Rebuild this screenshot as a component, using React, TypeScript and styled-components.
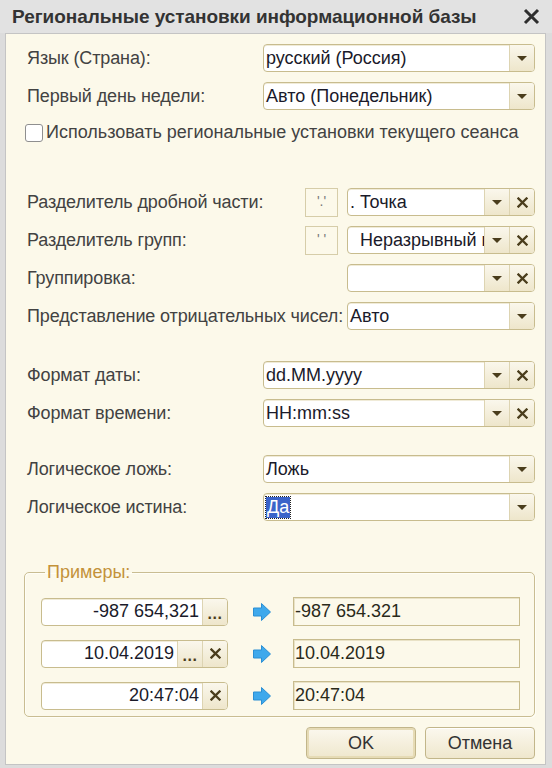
import React from 'react'
import styled, { createGlobalStyle } from 'styled-components'

const GlobalStyle = createGlobalStyle`
  html, body {
    margin: 0;
    padding: 0;
    background: #d9d9d9;
  }
  body {
    font-family: "Liberation Sans", Arial, sans-serif;
  }
`

const ArrowDown = () => <Tri />

const Cross = ({ size = 11 }: { size?: number }) => (
  <svg width={size} height={size} viewBox="0 0 11 11">
    <path d="M1.5 1.5 L9.5 9.5 M9.5 1.5 L1.5 9.5" stroke="#4a3d1c" strokeWidth="2.3" strokeLinecap="square" />
  </svg>
)

const BlueArrow = () => (
  <svg width="20" height="20" viewBox="0 0 20 20">
    <path
      d="M1.5 6 H9.5 V1.5 L18.5 10 L9.5 18.5 V14 H1.5 Z"
      fill="#3fa9ec"
      stroke="#2b8fd4"
      strokeWidth="1"
      strokeLinejoin="round"
    />
  </svg>
)

type Btn = 'drop' | 'clear' | 'dots'

const FieldButtons = ({ buttons }: { buttons: Btn[] }) => (
  <>
    {buttons.map((b, i) => (
      <SegButton key={i}>
        {b === 'drop' && <ArrowDown />}
        {b === 'clear' && <Cross />}
        {b === 'dots' && <Dots>...</Dots>}
      </SegButton>
    ))}
  </>
)

const SelectRow = ({
  label,
  value,
  buttons,
  selected,
}: {
  label: string
  value: string
  buttons: Btn[]
  selected?: boolean
}) => (
  <Row>
    <Label>{label}</Label>
    <Field $w={272}>
      <FieldText>{selected ? <Selected>{value}</Selected> : value}</FieldText>
      <FieldButtons buttons={buttons} />
    </Field>
  </Row>
)

const SeparatorRow = ({
  label,
  sample,
  value,
  buttons = ['drop', 'clear'],
}: {
  label: string
  sample?: string
  value: string
  buttons?: Btn[]
}) => (
  <Row>
    <Label>{label}</Label>
    <RightPart>
      {sample !== undefined ? <SampleBox>{sample}</SampleBox> : <SampleGap />}
      <Field $w={188}>
        <FieldText>{value}</FieldText>
        <FieldButtons buttons={buttons} />
      </Field>
    </RightPart>
  </Row>
)

const examples: { input: string; buttons: Btn[]; output: string }[] = [
  { input: '-987 654,321', buttons: ['dots'], output: '-987 654.321' },
  { input: '10.04.2019', buttons: ['dots', 'clear'], output: '10.04.2019' },
  { input: '20:47:04', buttons: ['clear'], output: '20:47:04' },
]

const App = () => {
  return (
    <>
      <GlobalStyle />
      <Window>
        <TitleBar>
          <Title>Региональные установки информационной базы</Title>
          <CloseBtn>
            <svg width="17" height="17" viewBox="0 0 17 17">
              <path d="M2 2 L15 15 M15 2 L2 15" stroke="#2e2e2e" strokeWidth="3" />
            </svg>
          </CloseBtn>
        </TitleBar>
        <Body>
          <SelectRow label="Язык (Страна):" value="русский (Россия)" buttons={['drop']} />
          <SelectRow label="Первый день недели:" value="Авто (Понедельник)" buttons={['drop']} />
          <CheckRow>
            <CheckBox />
            <CheckText>Использовать региональные установки текущего сеанса</CheckText>
          </CheckRow>

          <Group $top={36}>
            <SeparatorRow label="Разделитель дробной части:" sample="'.'" value=". Точка" />
            <SeparatorRow label="Разделитель групп:" sample="' '" value="  Неразрывный пробел" />
            <SeparatorRow label="Группировка:" value="" />
            <SeparatorRow label="Представление отрицательных чисел:" value="Авто" buttons={['drop']} />
          </Group>

          <Group $top={21}>
            <SelectRow label="Формат даты:" value="dd.MM.yyyy" buttons={['drop', 'clear']} />
            <SelectRow label="Формат времени:" value="HH:mm:ss" buttons={['drop', 'clear']} />
          </Group>

          <Group $top={18}>
            <SelectRow label="Логическое ложь:" value="Ложь" buttons={['drop']} />
            <SelectRow label="Логическое истина:" value="Да" buttons={['drop']} selected />
          </Group>

          <Examples>
            <Legend>Примеры:</Legend>
            {examples.map((ex, i) => (
              <ExampleRow key={i}>
                <Field $w={187}>
                  <FieldText $right>{ex.input}</FieldText>
                  <FieldButtons buttons={ex.buttons} />
                </Field>
                <ArrowCell>
                  <BlueArrow />
                </ArrowCell>
                <Output>{ex.output}</Output>
              </ExampleRow>
            ))}
          </Examples>

          <Footer>
            <DialogButton $default>OK</DialogButton>
            <DialogButton>Отмена</DialogButton>
          </Footer>
        </Body>
      </Window>
    </>
  )
}

const Window = styled.div`
  width: 552px;
  height: 768px;
  display: flex;
  flex-direction: column;
  background: #dcdcdc;
  box-sizing: border-box;
`

const TitleBar = styled.div`
  height: 33px;
  display: flex;
  align-items: center;
  justify-content: space-between;
  padding: 0 12px 0 12px;
  background: #e2e2e2;
  flex-shrink: 0;
`

const Title = styled.div`
  font-size: 19px;
  font-weight: 700;
  color: #333;
  white-space: nowrap;
  letter-spacing: -0.05px;
`

const CloseBtn = styled.div`
  display: flex;
  align-items: center;
`

const Body = styled.div`
  flex: 1;
  margin: 0 6px 3px 5px;
  border: 1px solid #c4c4c4;
  background: #fcf9ea;
  padding: 10px 10px 0 21px;
  display: flex;
  flex-direction: column;
  gap: 10px;
`

const Group = styled.div<{ $top: number }>`
  display: flex;
  flex-direction: column;
  gap: 10px;
  margin-top: ${p => p.$top}px;
`

const Row = styled.div`
  display: flex;
  align-items: center;
  height: 28px;
`

const Label = styled.div`
  flex: 1;
  min-width: 0;
  font-size: 18px;
  letter-spacing: -0.12px;
  color: #424242;
  white-space: nowrap;
`

const RightPart = styled.div`
  width: 272px;
  flex-shrink: 0;
  display: flex;
  align-items: center;
`

const SampleBox = styled.div`
  margin-left: 42px;
  margin-right: 9px;
  width: 33px;
  height: 29px;
  border: 1px solid #d6cda9;
  display: flex;
  align-items: flex-start;
  justify-content: center;
  padding-top: 4px;
  box-sizing: border-box;
  font-size: 14px;
  color: #777;
`

const SampleGap = styled.div`
  width: 84px;
`

const Field = styled.div<{ $w: number }>`
  width: ${p => p.$w}px;
  flex-shrink: 0;
  height: 28px;
  box-sizing: border-box;
  border: 1px solid #c8bc8e;
  border-radius: 4px;
  background: #fff;
  display: flex;
  overflow: hidden;
  box-shadow: inset 0 1px 0 #f0ebd8;
`

const FieldText = styled.div<{ $right?: boolean }>`
  flex: 1;
  min-width: 0;
  display: flex;
  align-items: center;
  justify-content: ${p => (p.$right ? 'flex-end' : 'flex-start')};
  padding: 0 ${p => (p.$right ? '3px' : '0')} 0 2px;
  font-size: 18px;
  color: #1a1a2a;
  white-space: pre;
  overflow: hidden;
`

const Selected = styled.span`
  background: #3a63c9;
  color: #fff;
  padding: 0 1px;
  outline: 1px dotted #222;
`

const SegButton = styled.div`
  width: 24px;
  flex-shrink: 0;
  border-left: 1px solid #ddd4b2;
  background: linear-gradient(#faf7ec, #eee6cb);
  display: flex;
  align-items: center;
  justify-content: center;
`

const Tri = styled.span`
  width: 0;
  height: 0;
  border-left: 5px solid transparent;
  border-right: 5px solid transparent;
  border-top: 5px solid #4a3d1c;
  margin-top: 1px;
`

const Dots = styled.span`
  font-size: 16px;
  font-weight: 700;
  color: #4a3d1c;
  letter-spacing: 0.5px;
  margin-top: 4px;
`

const CheckRow = styled.div`
  display: flex;
  align-items: center;
  gap: 3px;
  margin-left: -2px;
  margin-top: 3px;
  height: 19px;
`

const CheckBox = styled.div`
  width: 18px;
  height: 18px;
  box-sizing: border-box;
  border: 1px solid #8f8f8f;
  border-radius: 3px;
  background: #fff;
`

const CheckText = styled.div`
  font-size: 18px;
  color: #424242;
  white-space: nowrap;
`

const Examples = styled.fieldset`
  margin: 31px 0 0 -3px;
  padding: 14px 14px 6px 16px;
  border: 1px solid #c9bd92;
  border-radius: 5px;
  box-shadow: inset 1px 1px 0 #fffef6, 1px 1px 0 #fffef6;
  display: flex;
  flex-direction: column;
  gap: 13px;
`

const Legend = styled.legend`
  margin-left: 4px;
  padding: 0 2px;
  font-size: 18px;
  color: #c3923a;
`

const ExampleRow = styled.div`
  display: flex;
  align-items: center;
  height: 29px;
`

const ArrowCell = styled.div`
  width: 65px;
  display: flex;
  justify-content: center;
  padding-left: 2px;
  box-sizing: border-box;
`

const Output = styled.div`
  flex: 1;
  height: 29px;
  box-sizing: border-box;
  border: 1px solid #c8bc8e;
  box-shadow: inset 1px 1px 0 #e9e2c6;
  display: flex;
  align-items: center;
  padding-left: 1px;
  font-size: 18px;
  color: #2a2a1a;
`

const Footer = styled.div`
  display: flex;
  justify-content: flex-end;
  gap: 9px;
`

const DialogButton = styled.div<{ $default?: boolean }>`
  width: 110px;
  height: 32px;
  box-sizing: border-box;
  border: 1px solid #c2b68a;
  border-radius: 4px;
  background: linear-gradient(#fbf8ee, #efe7cd);
  box-shadow: ${p => (p.$default ? 'inset 0 0 0 2px #e6dbb5' : 'inset 0 1px 0 #fff')};
  display: flex;
  align-items: center;
  justify-content: center;
  font-size: 18px;
  color: #333;
`

export default App
